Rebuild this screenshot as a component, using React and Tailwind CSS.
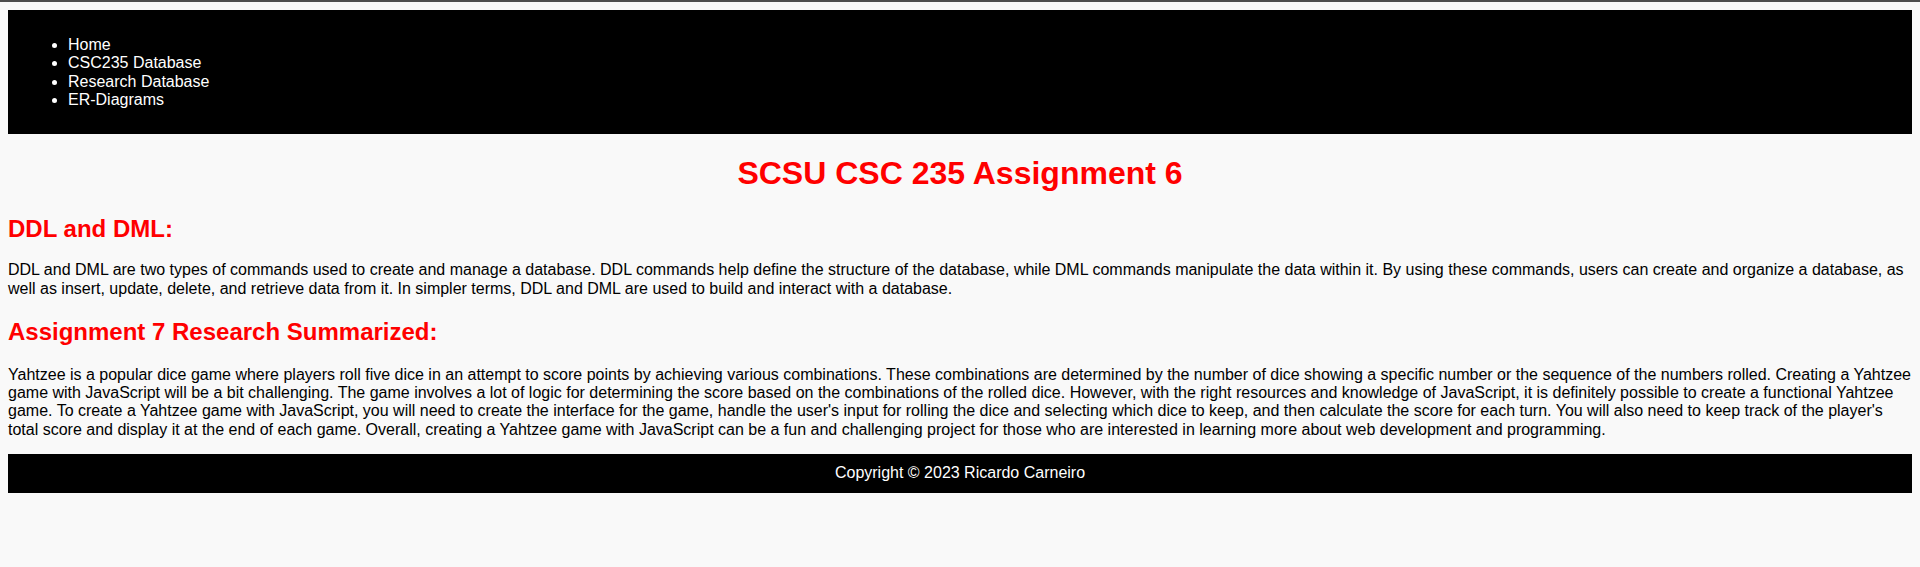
export default function App() {
  return (
    <div className="min-h-screen bg-[#f9f9f9] border-t-2 border-[#4d4d4d] font-['Liberation_Sans',Arial,sans-serif] text-base leading-[1.15] text-black">
      <div className="m-2 flow-root">
        {/* Nav */}
        <header className="bg-black px-5 pt-[10px] pb-[8px]">
          <ul className="my-4 list-disc pl-10 text-white">
            <li>Home</li>
            <li>CSC235 Database</li>
            <li>Research Database</li>
            <li>ER-Diagrams</li>
          </ul>
        </header>

        {/* Main */}
        <main>
          <h1 className="my-[21.44px] text-center text-[32px] font-bold text-[#ff0000]">
            SCSU CSC 235 Assignment 6
          </h1>

          <h2 className="mt-[23px] mb-[19px] text-2xl leading-[1.15] font-bold text-[#ff0000]">
            DDL and DML:
          </h2>
          <p className="my-4">
            DDL and DML are two types of commands used to create and manage a database. DDL commands help define the structure of the database, while DML commands manipulate the data within it. By using these commands, users can create and organize a database, as well as insert, update, delete, and retrieve data from it. In simpler terms, DDL and DML are used to build and interact with a database.
          </p>

          <h2 className="mt-[19.92px] mb-[19.92px] text-2xl leading-[1.15] font-bold text-[#ff0000]">
            Assignment 7 Research Summarized:
          </h2>
          <p className="mt-[17px] mb-[15px]">
            Yahtzee is a popular dice game where players roll five dice in an attempt to score points by achieving various combinations. These combinations are determined by the number of dice showing a specific number or the sequence of the numbers rolled. Creating a Yahtzee game with JavaScript will be a bit challenging. The game involves a lot of logic for determining the score based on the combinations of the rolled dice. However, with the right resources and knowledge of JavaScript, it is definitely possible to create a functional Yahtzee game. To create a Yahtzee game with JavaScript, you will need to create the interface for the game, handle the user's input for rolling the dice and selecting which dice to keep, and then calculate the score for each turn. You will also need to keep track of the player's total score and display it at the end of each game. Overall, creating a Yahtzee game with JavaScript can be a fun and challenging project for those who are interested in learning more about web development and programming.
          </p>
        </main>

        {/* Footer */}
        <footer className="bg-black py-[10px] text-center text-white">
          Copyright © 2023 Ricardo Carneiro
        </footer>
      </div>
    </div>
  );
}
